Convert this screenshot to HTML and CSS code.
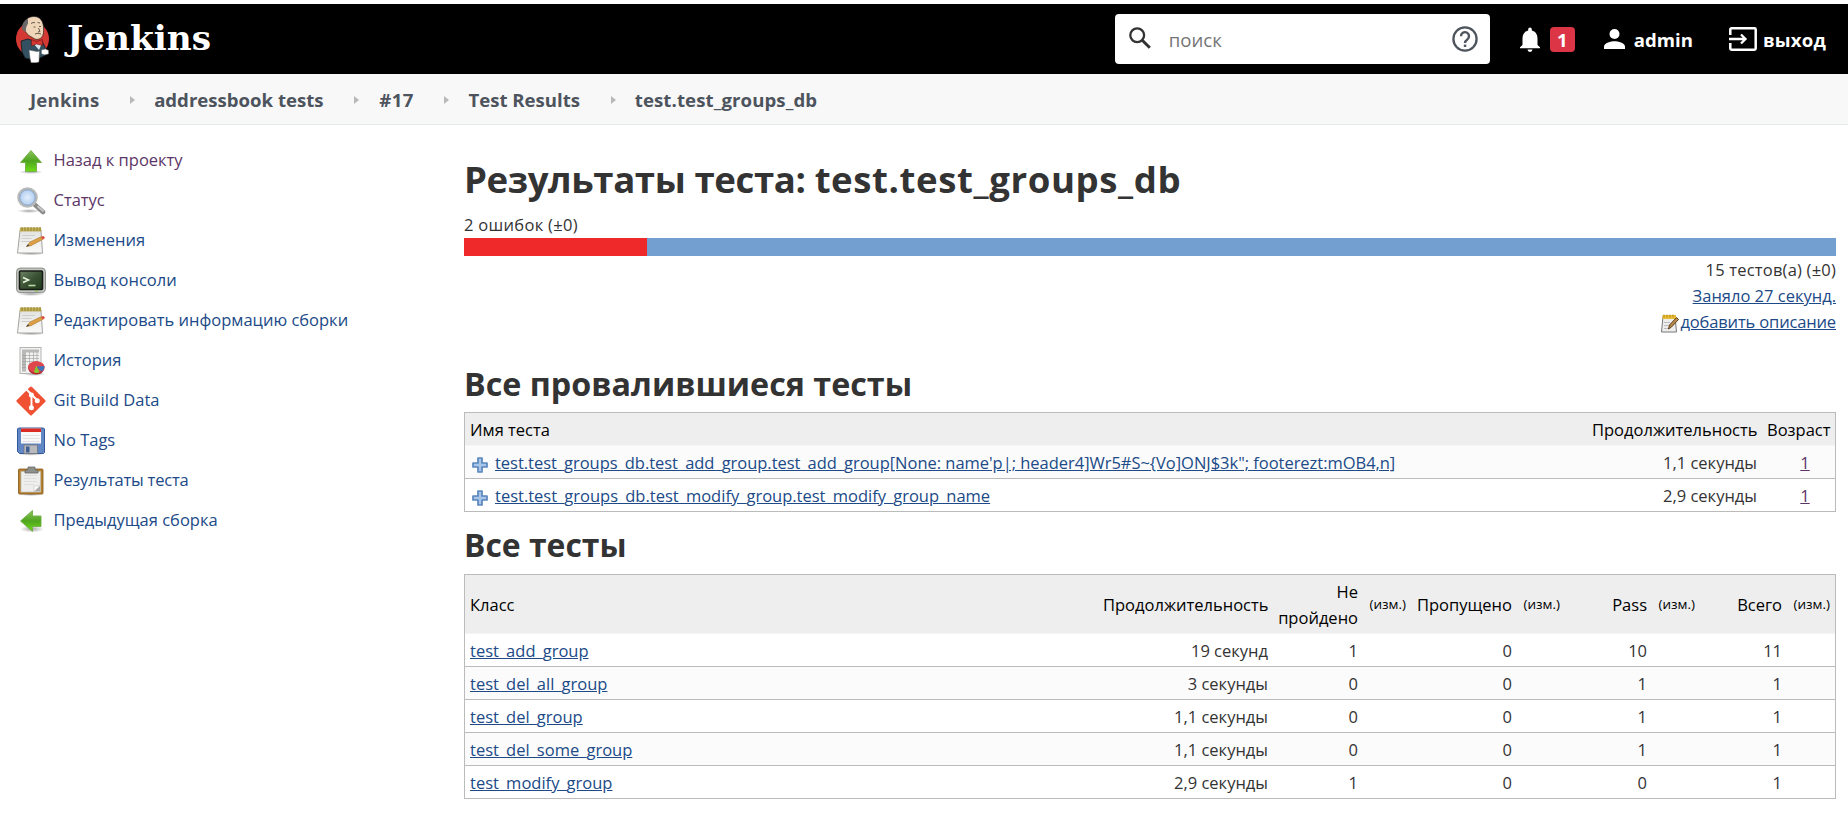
FILE: index.html
```html
<!DOCTYPE html>
<html lang="ru">
<head>
<meta charset="utf-8">
<title>test.test_groups_db [Jenkins]</title>
<link rel="stylesheet" href="styles.css">
</head>
<body>
<svg class="defs" width="0" height="0">
  <defs>
    <linearGradient id="green" x1="0" y1="0" x2="0" y2="1"><stop offset="0" stop-color="#8cc45c"/><stop offset=".5" stop-color="#4fa51f"/><stop offset="1" stop-color="#6fdc17"/></linearGradient>
    <linearGradient id="paper" x1="0" y1="0" x2="0" y2="1"><stop offset="0" stop-color="#e2e2e0"/><stop offset="1" stop-color="#fafafa"/></linearGradient>
    <linearGradient id="screen" x1="0" y1="0" x2="1" y2="1"><stop offset="0" stop-color="#6f8265"/><stop offset=".5" stop-color="#3a5233"/><stop offset="1" stop-color="#1f3a1b"/></linearGradient>
    <radialGradient id="lens"><stop offset="0" stop-color="#e3effb"/><stop offset="1" stop-color="#a9c9ee"/></radialGradient>
    <radialGradient id="shade"><stop offset="0" stop-color="#000" stop-opacity=".35"/><stop offset="1" stop-color="#000" stop-opacity="0"/></radialGradient>
    <symbol id="notepad" viewBox="0 0 30 30">
      <ellipse cx="15" cy="27.500" rx="14" ry="2" fill="url(#shade)"/>
      <path d="M4 4.500h21l1.500 22.500H1.500z" fill="url(#paper)" stroke="#a3a3a0"/>
      <path d="M4 1.500h21l.5 4h-22z" fill="#c2b15a"/>
      <path d="M6 1v4M9 1v4M12 1v4M15 1v4M18 1v4M21 1v4M24 1v4" stroke="#94822c" stroke-width="1"/>
      <path d="M6 9.500h13M5.500 12.500h10M5.500 15.500h9" stroke="#cfcfcf"/>
      <path d="M10.500 20.500l3.500-4.500L25 10.800l2 2.400-12 6.500z" fill="#dba047" stroke="#b0772a" stroke-width=".6"/>
      <path d="M10 20.800l2-2.600 1.400 1.600z" fill="#444"/>
      <path d="M25 10.800l2.500-.8 1.500 2-2 1.500z" fill="#e04a3c"/>
    </symbol>
    <symbol id="plus" viewBox="0 0 16 16">
      <path d="M6 1h4v5h5v4h-5v5H6v-5H1V6h5z" fill="#a9c6ea" stroke="#5a86bd" stroke-width="1.700" stroke-linejoin="round"/>
    </symbol>
  </defs>
</svg>

<header class="header">
  <a class="brand">
    <svg class="butler" viewBox="0 0 33 47">
      <ellipse cx="16.500" cy="23" rx="16.500" ry="17" fill="#d33833"/>
      <path d="M5 25L12 23l8 3 6-1 3 6 1 8-6 3-7 2-8-2-3-6z" fill="#335061" stroke="#101a20" stroke-width=".8"/>
      <path d="M8.500 12C7.500 4 12 .5 18 .5S27 5 27.500 11c.4 5 0 8-2 10.500-3 2.500-6 2.500-9 0-4-2-7-4-8-9.500z" fill="#efd6b9" stroke="#2a2220" stroke-width=".7"/>
      <path d="M12 3C7 5 5.500 9 6.500 14l3 2 .8-5 1.700-3.500z" fill="#6a6768"/>
      <path d="M15 7.500q2-1.500 4-.8M21.500 6.500l2.500.5M17.500 11h2M23 10.500h2M22.500 12l1.500 3.500-2 .5M19 18q3-1.500 6 0" fill="none" stroke="#4c3c36" stroke-width=".8"/>
      <path d="M17 27l6 7 3-7z" fill="#dce9ee"/>
      <path d="M15.500 23.500l5 2 6-2v6l-6-1.500-5 2z" fill="#d33833" stroke="#6d1614" stroke-width=".6"/>
      <path d="M13 34l8 1.500 2.500-.5-.5 11-3 .8h-5L14 42z" fill="#fff" stroke="#555" stroke-width=".5"/>
      <path d="M25.500 34l4-1 3 1.500v3.500l-4 .8-3-1z" fill="#fff" stroke="#777" stroke-width=".5"/>
    </svg>
    <span class="brand-name">Jenkins</span>
  </a>
  <div class="search">
    <svg class="search-icon" viewBox="0 0 22 22"><circle cx="8.200" cy="8.200" r="6.900" fill="none" stroke="#333" stroke-width="2.300"/><path d="M13 13l7.800 7.800" stroke="#333" stroke-width="3"/></svg>
    <span class="search-text">поиск</span>
    <svg class="help-icon" viewBox="0 0 26 26"><circle cx="13" cy="13" r="11.600" fill="none" stroke="#4d545d" stroke-width="2.300"/><path d="M9 10.300a4 4 0 1 1 6.300 3.100C13.800 14.500 13 15.200 13 17" fill="none" stroke="#4d545d" stroke-width="2.400"/><path d="M11.800 18.600h2.500v2.400h-2.500z" fill="#4d545d"/></svg>
  </div>
  <div class="alerts">
    <svg class="bell" viewBox="0 0 20 25"><path d="M10 25a2.500 2.500 0 0 0 2.500-2.400h-5A2.500 2.500 0 0 0 10 25zM17.500 18v-6.500c0-4-2-7-5.700-7.900V2.200a1.800 1.800 0 0 0-3.600 0v1.400C4.500 4.500 2.500 7.500 2.500 11.500V18L0 20.300v1h20v-1z" fill="#fff"/></svg>
    <span class="badge">1</span>
  </div>
  <a class="user">
    <svg class="person" viewBox="0 0 21 20"><circle cx="10.500" cy="5" r="5" fill="#fff"/><path d="M0 20v-2.500C0 14 7 12.300 10.500 12.300S21 14 21 17.500V20z" fill="#fff"/></svg>
    <span>admin</span>
  </a>
  <a class="logout">
    <svg class="exit" viewBox="0 0 28 24"><path d="M1.300 8V2.500a1.200 1.200 0 0 1 1.200-1.200h23a1.200 1.200 0 0 1 1.200 1.200v19a1.200 1.200 0 0 1-1.200 1.200h-23a1.200 1.200 0 0 1-1.200-1.200V16" fill="none" stroke="#fff" stroke-width="2.500"/><path d="M0 12h16M12 7.500l4.500 4.500-4.500 4.500" fill="none" stroke="#fff" stroke-width="2.300"/></svg>
    <span>выход</span>
  </a>
</header>

<nav class="crumbs">
  <a class="c-jenkins">Jenkins</a><i class="sep"></i>
  <a>addressbook tests</a><i class="sep"></i>
  <a class="c-num">#17</a><i class="sep"></i>
  <a>Test Results</a><i class="sep"></i>
  <a class="c-last">test.test_groups_db</a>
</nav>

<div class="page">
  <aside class="side">
    <a class="task visited"><svg class="ico" viewBox="0 0 30 30"><ellipse cx="15" cy="26" rx="12" ry="2" fill="url(#shade)"/><path d="M15 4.500L25.500 16.500H20.500V25.500H9.500V16.500H4.500z" fill="url(#green)" stroke="#6fae45" stroke-width=".9"/></svg>Назад к проекту</a>
    <a class="task visited"><svg class="ico" viewBox="0 0 30 30"><ellipse cx="13" cy="25" rx="12" ry="2" fill="url(#shade)"/><path d="M18 18l9 8" stroke="#8b8c8a" stroke-width="4.500" stroke-linecap="round"/><path d="M22 20.500l5 4.500" stroke="#c6c7c5" stroke-width="1.800" stroke-linecap="round"/><circle cx="11.500" cy="11.500" r="9" fill="url(#lens)" stroke="#b9bbb9" stroke-width="2.600"/><circle cx="11.500" cy="11.500" r="7.700" fill="none" stroke="#7d9cc5" stroke-width=".8"/></svg>Статус</a>
    <a class="task"><svg class="ico"><use href="#notepad"/></svg>Изменения</a>
    <a class="task"><svg class="ico" viewBox="0 0 30 30"><ellipse cx="15" cy="28" rx="14" ry="2" fill="url(#shade)"/><rect x=".6" y="2.100" width="28.800" height="24.500" rx="3.500" fill="#c4c6c1" stroke="#8b8d88"/><rect x="3.500" y="5" width="23" height="18.500" rx="1" fill="url(#screen)" stroke="#181c16" stroke-width="1.600"/><path d="M7 11.500l5.500 2.500-5.500 2.500" fill="none" stroke="#e8f5dc" stroke-width="1.600"/><path d="M12.500 19.500h7" stroke="#b9d7a4" stroke-width="1.600"/><path d="M19 25h3" stroke="#74c13c"/></svg>Вывод консоли</a>
    <a class="task"><svg class="ico"><use href="#notepad"/></svg>Редактировать информацию сборки</a>
    <a class="task"><svg class="ico" viewBox="0 0 30 30"><ellipse cx="18" cy="28" rx="12" ry="2" fill="url(#shade)"/><rect x="4" y="1.500" width="21" height="26" fill="#f2f2f1" stroke="#b4b4b2"/><path d="M6 3.500h17v3H6zM6 3.500h4v22H6z" fill="#b9b9b9"/><path d="M10 9.500h13M10 12.500h13M10 15.500h13M13.500 6v20M17.500 6v16M21 6v20M6 9.500h4M6 12.500h4M6 15.500h4M6 18.500h4M6 21.500h4" stroke="#9a9a9a" stroke-width=".6"/><ellipse cx="20.300" cy="22" rx="8.200" ry="6.500" fill="#b8202a"/><ellipse cx="20.300" cy="21" rx="8.200" ry="5.800" fill="#e0474c"/><path d="M20.300 20.500l8-.5c0 3-1 4.500-3 5.500z" fill="#3d76bd"/><path d="M20.300 19.500l3.200 7a10 10 0 0 1-5.700 0z" fill="#84cc2c"/></svg>История</a>
    <a class="task"><svg class="ico" viewBox="0 0 30 30"><path d="M14 .9a1.400 1.400 0 0 1 2 0L29.100 14a1.400 1.400 0 0 1 0 2L16 29.100a1.400 1.400 0 0 1-2 0L.9 16a1.400 1.400 0 0 1 0-2z" fill="#f05133"/><path d="M10.500 3.500l5 5v13.500M15.500 8.500l6 6" fill="none" stroke="#fff" stroke-width="1.900"/><circle cx="15.400" cy="9" r="2.500" fill="#fff"/><circle cx="15.400" cy="21.700" r="2.500" fill="#fff"/><circle cx="21.300" cy="14.800" r="2.500" fill="#fff"/></svg>Git Build Data</a>
    <a class="task"><svg class="ico" viewBox="0 0 30 30"><ellipse cx="15" cy="28" rx="13" ry="1.800" fill="url(#shade)"/><path d="M2.500 2h25l1 1v23.500l-1 1H3.500l-2-2V3z" fill="#6187c4" stroke="#33589a"/><rect x="5" y="2.500" width="20" height="15" fill="#f8f8f8"/><rect x="5" y="2.500" width="20" height="3.500" fill="#dc2b22"/><path d="M6.500 9.500h17M6.500 12.500h17M6.500 15.500h17" stroke="#e2e2e4"/><rect x="8" y="19" width="13.500" height="8.500" fill="#b8babd" stroke="#73767c" stroke-width=".8"/><rect x="10" y="20.500" width="3.500" height="6" fill="#3e5f94"/></svg>No Tags</a>
    <a class="task"><svg class="ico" viewBox="0 0 30 30"><ellipse cx="15" cy="28.500" rx="13" ry="1.500" fill="url(#shade)"/><rect x="2.500" y="3" width="24.500" height="25" rx="1" fill="#b9822f" stroke="#7f5719" stroke-width=".8"/><path d="M5 5.500h19.500v20.500H5z" fill="#eeeeec" stroke="#bdbdbb" stroke-width=".7"/><path d="M8 9.500h12.500M8 12.500h12.500M8 15.500h12.500M8 18.500h10" stroke="#dfdfde"/><path d="M18 25.500l6-6v6z" fill="#a9a9a7"/><path d="M18 25.500v-5.500h6z" fill="#fff" stroke="#b5b5b3" stroke-width=".5"/><path d="M9 7V4.500l3-1V1h7v2.500l3 1V7z" fill="#8d908b" stroke="#656864" stroke-width=".8"/></svg><span class="res">Результаты теста</span></a>
    <a class="task"><svg class="ico" viewBox="0 0 30 30"><ellipse cx="16" cy="23" rx="12" ry="3.500" fill="url(#shade)"/><path d="M4.500 15L16.500 4.500V10H25V20.500H16.500V25.500z" fill="url(#green)" stroke="#6fae45" stroke-width=".9"/></svg>Предыдущая сборка</a>
  </aside>

  <main class="main">
    <h1><span class="h1-label">Результаты теста: </span><span class="h1-name">test.test_groups_db</span></h1>
    <div class="fails">2 ошибок (±0)</div>
    <div class="bar"><div class="bar-fail"></div></div>
    <div class="totals">
      <div class="total">15 тестов(а) (±0)</div>
      <div><a class="took">Заняло 27 секунд.</a></div>
      <div class="describe"><svg class="mini" viewBox="0 0 18 19"><path d="M2 2.500h12l1.500 15.500H.5z" fill="#eee" stroke="#777"/><path d="M1.500 1h13.500v4H1.500z" fill="#e8bd38"/><path d="M3 .5v3M6 .5v3M9 .5v3M12 .5v3" stroke="#a57c10" stroke-width=".8"/><path d="M3 8.500h6M3 11.500h5M3 14.500h4" stroke="#bbb"/><path d="M7.500 15l1-4 7-7.500 2 2-7 7.500z" fill="#b98a4b" stroke="#5b4018" stroke-width="1"/></svg><a class="add">добавить описание</a></div>
    </div>

    <h2 class="h-failed">Все провалившиеся тесты</h2>
    <table class="pane">
      <colgroup><col class="w-name"><col class="w-dur"><col class="w-age"></colgroup>
      <thead><tr><th class="l">Имя теста</th><th>Продолжительность</th><th class="age">Возраст</th></tr></thead>
      <tbody>
        <tr class="alt"><td class="l"><div class="case"><svg class="plus"><use href="#plus"/></svg><a class="case1">test.test_groups_db.test_add_group.test_add_group[None: name'p|; header4]Wr5#S~{Vo]ONJ$3k"; footerezt:mOB4,n]</a></div></td><td>1,1 секунды</td><td class="c"><a class="seen">1</a></td></tr>
        <tr><td class="l"><div class="case"><svg class="plus"><use href="#plus"/></svg><a>test.test_groups_db.test_modify_group.test_modify_group_name</a></div></td><td>2,9 секунды</td><td class="c"><a class="seen">1</a></td></tr>
      </tbody>
    </table>

    <h2 class="h-all">Все тесты</h2>
    <table class="pane all">
      <colgroup><col class="w-class"><col class="w-dur"><col class="w-fail"><col class="w-diff"><col class="w-skip"><col class="w-diff"><col class="w-num"><col class="w-diff"><col class="w-num"><col class="w-last"></colgroup>
      <thead><tr><th class="l">Класс</th><th>Продолжительность</th><th class="wrap">Не пройдено</th><th class="d">(изм.)</th><th>Пропущено</th><th class="d">(изм.)</th><th>Pass</th><th class="d">(изм.)</th><th>Всего</th><th class="d">(изм.)</th></tr></thead>
      <tbody>
        <tr><td class="l"><a>test_add_group</a></td><td>19 секунд</td><td>1</td><td></td><td>0</td><td></td><td>10</td><td></td><td>11</td><td></td></tr>
        <tr class="alt"><td class="l"><a>test_del_all_group</a></td><td>3 секунды</td><td>0</td><td></td><td>0</td><td></td><td>1</td><td></td><td>1</td><td></td></tr>
        <tr><td class="l"><a>test_del_group</a></td><td>1,1 секунды</td><td>0</td><td></td><td>0</td><td></td><td>1</td><td></td><td>1</td><td></td></tr>
        <tr class="alt"><td class="l"><a>test_del_some_group</a></td><td>1,1 секунды</td><td>0</td><td></td><td>0</td><td></td><td>1</td><td></td><td>1</td><td></td></tr>
        <tr><td class="l"><a>test_modify_group</a></td><td>2,9 секунды</td><td>1</td><td></td><td>0</td><td></td><td>0</td><td></td><td>1</td><td></td></tr>
      </tbody>
    </table>
  </main>
</div>
</body>
</html>
```
FILE: styles.css
```css
* { box-sizing: border-box; }
html, body { margin: 0; }
body {
  padding-top: 4px;
  background: #fff;
  color: #333;
  font: 16.5px/26px "Open Sans", "Noto Sans", sans-serif;
  white-space: nowrap;
  overflow: hidden;
}
svg { display: block; flex: none; }
.defs { position: absolute; }
a { color: #204a87; }

/* Top bar */
.header {
  display: flex;
  align-items: center;
  height: 70px;
  padding: 0 22px 0 16px;
  background: #000;
  color: #fff;
  font-size: 18.6px;
  font-weight: 700;
}
.brand { display: flex; align-items: center; margin-right: auto; color: #fff; }
.butler { width: 33px; height: 47px; }
.brand-name {
  margin-left: 18px;
  font: 700 34.3px/40px "DejaVu Serif", "Liberation Serif", serif;
  padding-bottom: 3px;
}
.search {
  display: flex;
  align-items: center;
  width: 375px;
  height: 50px;
  padding: 0 12px 0 14px;
  border-radius: 4px;
  background: #fff;
}
.search-icon { width: 22px; height: 22px; margin-bottom: 2px; }
.search-text { flex: 1; margin-left: 18px; padding-top: 2px; color: #757575; font-weight: 400; }
.help-icon { width: 26px; height: 26px; }
.alerts { display: flex; align-items: center; margin-left: 30px; }
.bell { width: 20px; height: 25px; }
.badge {
  width: 25px;
  height: 25px;
  margin-left: 10px;
  border-radius: 4px;
  background: #dc3545;
  text-align: center;
  line-height: 25px;
}
.user, .logout { display: flex; align-items: center; color: #fff; }
.user span, .logout span { padding-top: 1px; }
.user { margin-left: 29px; }
.person { width: 21px; height: 20px; margin-right: 9px; }
.logout { margin-left: 36px; }
.exit { width: 28px; height: 24px; margin-right: 6px; }
.logout span { letter-spacing: .2px; }

/* Breadcrumbs */
.crumbs {
  display: flex;
  align-items: center;
  height: 51px;
  padding: 2px 0 0 30px;
  border-bottom: 1px solid #e3e8ea;
  background: #f8f8f8;
  font-size: 18.6px;
  font-weight: 700;
}
.crumbs a { color: #4d545d; }
.c-jenkins { letter-spacing: .2px; }
.crumbs .c-num { margin-left: 1px; letter-spacing: .4px; }
.crumbs .c-last { letter-spacing: .1px; }
.sep {
  margin: -1px 19px 0 30.700px;
  border: 4.500px solid transparent;
  border-left: 5.500px solid #b9b9b9;
  border-right: 0;
}

.page { display: flex; }

/* Task list */
.side { width: 464px; padding: 15px 0 0 16px; }
.task { display: flex; align-items: center; height: 40px; padding-bottom: 1px; }
.ico { width: 30px; height: 30px; margin: 3px 7.500px 0 0; }
.visited { color: #5c3566; }
.res { letter-spacing: -.2px; }

/* Results */
.main { width: 1372px; }
h1, h2 { margin: 0; font-weight: 700; }
h1 { margin-top: 29px; font-size: 36.600px; line-height: 50px; white-space: pre; }
.h1-label { letter-spacing: -.400px; }
.h1-name { letter-spacing: .600px; }
.fails { margin-top: 8px; letter-spacing: .3px; }
.bar { height: 18px; background: #729fcf; }
.bar-fail { width: 13.340%; height: 18px; background: #ef2929; }
.totals { padding-top: 1px; text-align: right; }
.total { letter-spacing: .2px; }
.took, .add { text-decoration: underline; }
.add { letter-spacing: -.15px; }
.describe { display: flex; justify-content: flex-end; align-items: center; }
.mini { width: 18px; height: 19px; margin: 3px 1px 0 0; }
h2 { font-size: 32.300px; line-height: 40px; }
.h-failed { margin-top: 28px; }
.h-all { margin-top: 13px; font-size: 31.900px; }

.pane {
  width: 1372px;
  margin-top: 9px;
  table-layout: fixed;
  border-collapse: separate;
  border-spacing: 0;
  border: 1px solid #bbb;
  border-bottom: 0;
}
.pane th {
  height: 33px;
  padding: 2px 5px 0;
  border-bottom: 1px solid #f5f5f5;
  background: #eee;
  color: #000;
  font-weight: 400;
  text-align: right;
}
.pane td {
  height: 33px;
  padding: 2px 5px 0;
  border-bottom: 1px solid #bbb;
  text-align: right;
}
.pane .l { text-align: left; }
.pane .age { padding-right: 6px; }
.pane .c { padding-left: 18px; text-align: center; }
.pane td a { text-decoration: underline; }
.pane .seen { color: #5c3566; }
.pane .alt td { background: #fbfbfb; }
.case { display: flex; align-items: center; gap: 7px; padding-left: 2px; }
.plus { width: 16px; height: 16px; margin-top: 4px; }
.case1 { letter-spacing: -.03px; }
.all th { height: 59px; }
.all th.wrap { white-space: normal; }
.all th.d { padding-top: 0; font-size: 13.500px; }
.w-name { width: 1122px; }
.w-dur { width: 175px; }
.w-age { width: 73px; }
.w-class { width: 633px; }
.w-fail { width: 90px; }
.w-diff { width: 48px; }
.w-skip { width: 106px; }
.w-num { width: 87px; }
.w-last { width: 48px; }
```
